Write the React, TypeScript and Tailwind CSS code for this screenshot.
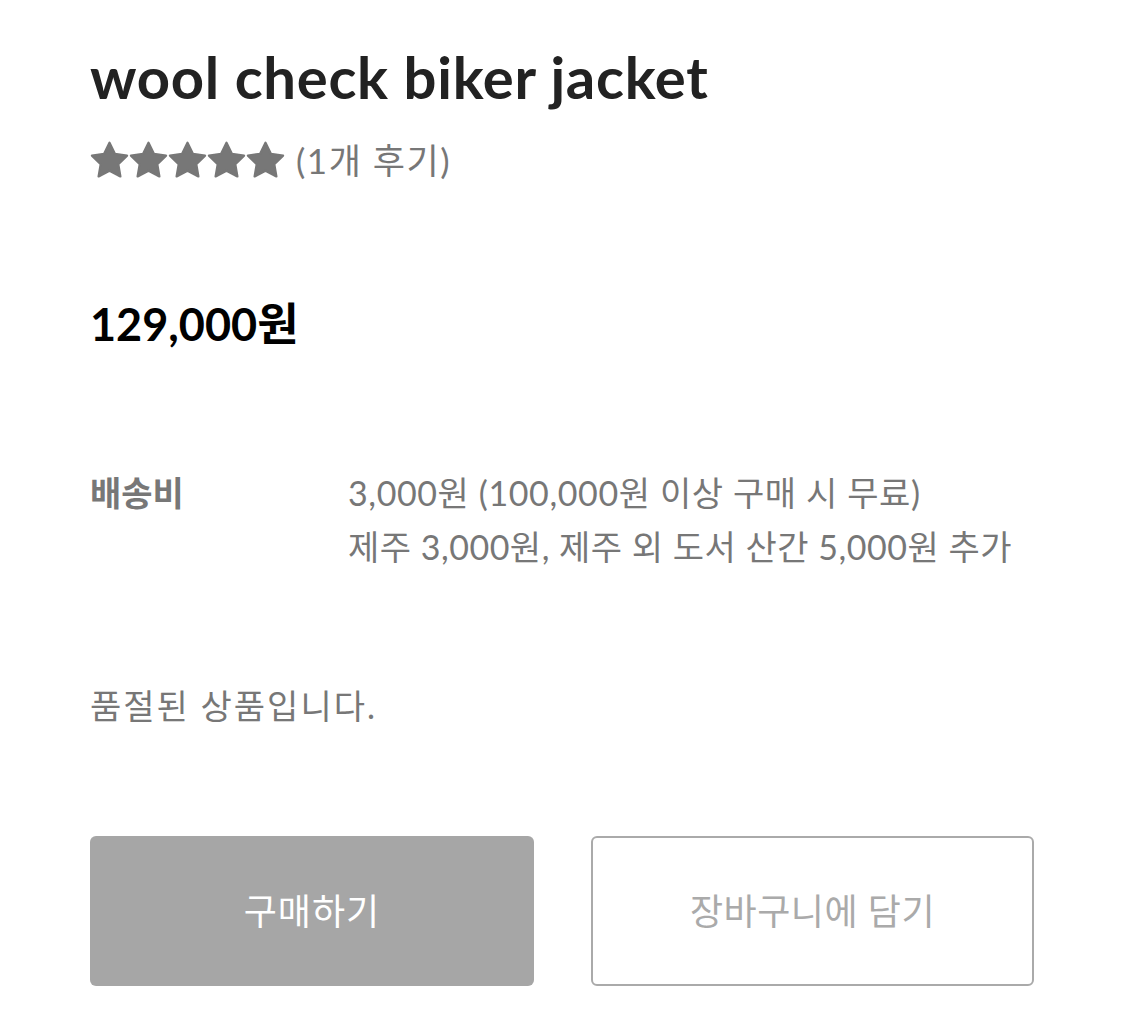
import React from "react";

const Star = () => (
  <svg width="39" height="38" viewBox="0 0 24 23" className="shrink-0">
    <path
      d="M12 0.9l3.3 6.8 7.5 1.1-5.4 5.3 1.3 7.5-6.7-3.5-6.7 3.5 1.3-7.5-5.4-5.3 7.5-1.1z"
      fill="#777777"
      stroke="#777777"
      strokeWidth="1.4"
      strokeLinejoin="round"
    />
  </svg>
);

export default function App() {
  return (
    <div
      className="w-[1125px] h-[1026px] bg-white pl-[90px] pr-[91px] pt-[44px]"
      style={{ fontFamily: 'Lato, "Noto Sans CJK KR", sans-serif' }}
    >
      <h1 className="text-[58px] leading-[66px] font-bold text-[#222222] tracking-[0.7px]">
        wool check biker jacket
      </h1>
      <div className="flex items-center mt-[30px] h-[40px]">
        <div className="flex">
          <Star />
          <Star />
          <Star />
          <Star />
          <Star />
        </div>
        <span className="ml-[11px] text-[35px] leading-[40px] tracking-[1.5px] text-[#777777]">(1개 후기)</span>
      </div>

      <div className="mt-[119px] text-[45px] font-bold text-black leading-[50px]">129,000원</div>

      <div className="mt-[117px] flex text-[34px] leading-[54px]">
        <div className="w-[258px] font-bold text-[#777777]">배송비</div>
        <div className="text-[#777777]">
          <div className="tracking-[0.6px]">3,000원 (100,000원 이상 구매 시 무료)</div>
          <div className="tracking-[0.5px]">제주 3,000원, 제주 외 도서 산간 5,000원 추가</div>
        </div>
      </div>

      <div className="mt-[105px] text-[34px] leading-[54px] tracking-[2px] text-[#777777]">품절된 상품입니다.</div>

      <div className="mt-[103px] flex gap-[57px]">
        <button className="w-[444px] h-[150px] rounded-[6px] bg-[#a6a6a6] text-white text-[36px] tracking-[1px]">
          구매하기
        </button>
        <button className="w-[443px] h-[150px] rounded-[6px] border-2 border-[#aaaaaa] bg-white text-[#aaaaaa] text-[36px] tracking-[0.5px]">
          장바구니에 담기
        </button>
      </div>
    </div>
  );
}
